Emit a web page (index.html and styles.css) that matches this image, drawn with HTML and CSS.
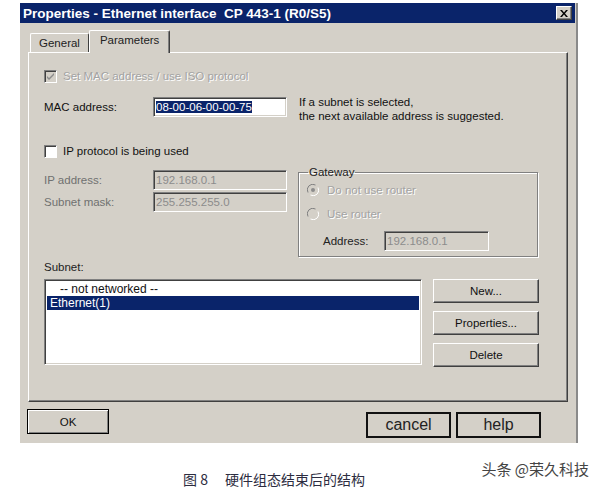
FILE: index.html
```html
<!DOCTYPE html>
<html lang="en">

<head>
    <meta charset="UTF-8">
    <title>Properties - Ethernet interface</title>
    <link rel="stylesheet" href="styles.css">
</head>

<body>
    <div class="dialog">
        <div class="titlebar">
            <span class="title">Properties - Ethernet interface&nbsp; CP 443-1 (R0/S5)</span>
            <span class="close">
                <svg width="8" height="7" viewBox="0 0 8 7"><path d="M0 0h2l2 2.5L6 0h2L5 3.5 8 7H6L4 4.5 2 7H0l3-3.5z" fill="#000"/></svg>
            </span>
        </div>

        <div class="tabs">
            <div class="tab">General</div>
            <div class="tab active">Parameters</div>
        </div>

        <div class="panel">
            <div class="check disabled">
                <span class="box box-disabled">
                    <svg width="9" height="9" viewBox="0 0 9 9"><path d="M1 4l2 2 5-5v2L3 8 1 6z" fill="#8c8c8c"/></svg>
                </span>
                <span class="dim">Set MAC address / use ISO protocol</span>
            </div>

            <div class="mac-row">
                <span class="field-label">MAC address:</span>
                <div class="input"><span class="sel">08-00-06-00-00-75</span></div>
                <div class="hint">If a subnet is selected,<br>the next available address is suggested.</div>
            </div>

            <div class="check ip-check">
                <span class="box"></span>
                <span>IP protocol is being used</span>
            </div>

            <div class="ip-row">
                <div class="ip-fields">
                    <div class="field-row">
                        <span class="field-label grey">IP address:</span>
                        <div class="input input-off">192.168.0.1</div>
                    </div>
                    <div class="field-row">
                        <span class="field-label grey">Subnet mask:</span>
                        <div class="input input-off">255.255.255.0</div>
                    </div>
                </div>

                <fieldset class="gateway">
                    <legend>Gateway</legend>
                    <div class="radio-row">
                        <svg class="radio" width="12" height="12" viewBox="0 0 12 12">
                            <circle cx="6" cy="6" r="5.5" fill="#d4d0c8"/>
                            <path d="M1 8.5A5.5 5.5 0 0 1 8.5 1" stroke="#808080" fill="none"/>
                            <path d="M11 3.5A5.5 5.5 0 0 1 3.5 11" stroke="#fff" fill="none"/>
                            <circle cx="6" cy="6" r="2" fill="#8c8c8c"/>
                        </svg>
                        <span class="dim">Do not use router</span>
                    </div>
                    <div class="radio-row second">
                        <svg class="radio" width="12" height="12" viewBox="0 0 12 12">
                            <circle cx="6" cy="6" r="5.5" fill="#d4d0c8"/>
                            <path d="M1 8.5A5.5 5.5 0 0 1 8.5 1" stroke="#808080" fill="none"/>
                            <path d="M11 3.5A5.5 5.5 0 0 1 3.5 11" stroke="#fff" fill="none"/>
                        </svg>
                        <span class="dim">Use router</span>
                    </div>
                    <div class="address-row">
                        <span class="address-label">Address:</span>
                        <div class="input input-off address-input">192.168.0.1</div>
                    </div>
                </fieldset>
            </div>

            <div class="subnet-label">Subnet:</div>
            <div class="subnet-row">
                <div class="listbox">
                    <div class="item not-net">-- not networked --</div>
                    <div class="item selected">Ethernet(1)</div>
                </div>
                <div class="side-buttons">
                    <div class="btn">New...</div>
                    <div class="btn">Properties...</div>
                    <div class="btn">Delete</div>
                </div>
            </div>
        </div>

        <div class="footer">
            <div class="btn ok-btn">OK</div>
            <div class="big-btn cancel-btn">cancel</div>
            <div class="big-btn">help</div>
        </div>
    </div>

    <div class="bottom">
        <div class="caption"><span class="fig">图 8</span>硬件组态结束后的结构</div>
        <div class="mark">头条 @荣久科技</div>
    </div>
</body>

</html>
```

FILE: styles.css
```css
body {
    margin: 0;
    background-color: #fff;
    font-family: "Liberation Sans", Arial, sans-serif;
    font-size: 11.5px;
    color: #111;
}

.dialog {
    margin: 3px 0 0 20px;
    width: 558px;
    height: 440px;
    box-sizing: border-box;
    background-color: #d4d0c8;
    border-right: 2px solid #8a8a8a;
}

.titlebar {
    height: 20px;
    margin-right: 1px;
    background-color: #0a246a;
    display: flex;
    align-items: center;
    justify-content: space-between;
    padding: 0 3px 0 3px;
}

.title {
    color: #fff;
    font-weight: bold;
    font-size: 13.5px;
}

.close {
    width: 16px;
    height: 14px;
    box-sizing: border-box;
    background-color: #d4d0c8;
    border: 1px solid;
    border-color: #fff #404040 #404040 #fff;
    box-shadow: inset -1px -1px #808080;
    display: flex;
    align-items: center;
    justify-content: center;
}

.tabs {
    display: flex;
    align-items: flex-end;
    margin: 8px 0 0 10px;
    height: 21px;
    position: relative;
    z-index: 1;
}

.tab {
    height: 19px;
    box-sizing: border-box;
    padding: 0 8px;
    line-height: 18px;
    border: 1px solid;
    border-color: #fff #404040 transparent #fff;
    border-bottom: none;
    border-radius: 2px 2px 0 0;
    color: #222;
}

.tab.active {
    height: 23px;
    margin-bottom: -1px;
    padding: 0 10px;
    line-height: 19px;
    background-color: #d4d0c8;
    box-shadow: inset -1px 0 #808080;
}

.panel {
    margin-left: 8px;
    width: 540px;
    height: 350px;
    box-sizing: border-box;
    border: 1px solid;
    border-color: #fff #404040 #404040 #fff;
    box-shadow: inset -1px -1px #808080;
    padding: 16px 0 0 15px;
}

.check {
    display: flex;
    align-items: center;
    height: 14px;
}

.box {
    width: 13px;
    height: 13px;
    box-sizing: border-box;
    background-color: #fff;
    border: 1px solid;
    border-color: #808080 #fff #fff #808080;
    box-shadow: inset 1px 1px #404040;
    margin-right: 6px;
    display: flex;
    align-items: center;
    justify-content: center;
}

.box-disabled {
    background-color: #d4d0c8;
}

.dim {
    color: #a3a3a3;
    text-shadow: 1px 1px 0 #fff;
}

.grey {
    color: #707070;
}

.mac-row {
    display: flex;
    align-items: flex-start;
    margin-top: 14px;
}

.field-label {
    width: 109px;
    line-height: 20px;
    flex-shrink: 0;
}

.input {
    width: 134px;
    height: 20px;
    box-sizing: border-box;
    background-color: #fff;
    border: 1px solid;
    border-color: #808080 #fff #fff #808080;
    box-shadow: inset 1px 1px #404040, inset -1px -1px #d4d0c8;
    padding: 0 2px;
    line-height: 18px;
    flex-shrink: 0;
}

.sel {
    background-color: #0a246a;
    color: #fff;
}

.input-off {
    background-color: #d4d0c8;
    color: #8c8c8c;
}

.hint {
    margin: -2px 0 0 12px;
    line-height: 14px;
}

.ip-check {
    margin-top: 21px;
}

.ip-row {
    display: flex;
    align-items: flex-start;
    margin-top: 7px;
}

.ip-fields {
    width: 243px;
    margin-top: 5px;
    display: flex;
    flex-direction: column;
    gap: 2px;
}

.field-row {
    display: flex;
}

.gateway {
    margin: 0 0 0 11px;
    padding: 0 0 5px 0;
    width: 240px;
    box-sizing: border-box;
    border: 1px solid #808080;
    box-shadow: inset 1px 1px #fff, 1px 1px #fff;
}

.gateway legend {
    margin-left: 9px;
    padding: 0 1px;
    line-height: 14px;
    color: #222;
}

.radio-row {
    display: flex;
    align-items: center;
    height: 14px;
    margin: 4px 0 0 8px;
}

.radio-row.second {
    margin-top: 10px;
}

.radio {
    margin-right: 8px;
}

.address-row {
    display: flex;
    align-items: center;
    margin: 10px 0 0 24px;
}

.address-label {
    width: 61px;
    color: #222;
}

.address-input {
    width: 105px;
}

.subnet-label {
    margin-top: 3px;
    line-height: 14px;
    color: #222;
}

.subnet-row {
    display: flex;
    align-items: flex-start;
    margin-top: 5px;
}

.listbox {
    width: 378px;
    height: 86px;
    box-sizing: border-box;
    background-color: #fff;
    border: 1px solid;
    border-color: #808080 #fff #fff #808080;
    box-shadow: inset 1px 1px #404040, inset -1px -1px #d4d0c8;
    padding: 2px 2px 0 2px;
    font-size: 12px;
}

.item {
    height: 14px;
    line-height: 14px;
    padding-left: 3px;
}

.item.not-net {
    padding-left: 13px;
}

.item.selected {
    background-color: #0a246a;
    color: #fff;
}

.side-buttons {
    margin-left: 11px;
    display: flex;
    flex-direction: column;
    gap: 8px;
}

.btn {
    width: 106px;
    height: 24px;
    box-sizing: border-box;
    background-color: #d4d0c8;
    border: 1px solid;
    border-color: #fff #404040 #404040 #fff;
    box-shadow: inset -1px -1px #808080;
    display: flex;
    align-items: center;
    justify-content: center;
    color: #111;
}

.footer {
    display: flex;
    align-items: flex-start;
    margin-top: 7px;
    padding: 0 35px 0 7px;
}

.ok-btn {
    width: 82px;
    height: 25px;
    border: 1px solid #000;
    box-shadow: inset 1px 1px #fff, inset -1px -1px #808080;
}

.big-btn {
    width: 85px;
    height: 26px;
    box-sizing: border-box;
    border: 2px solid #111;
    margin-top: 3px;
    display: flex;
    align-items: center;
    justify-content: center;
    font-size: 16px;
    color: #222;
}

.cancel-btn {
    margin-left: auto;
    margin-right: 5px;
}

.bottom {
    display: flex;
    align-items: flex-start;
    padding-right: 13px;
    font-family: "Noto Sans CJK SC", sans-serif;
}

.caption {
    margin: 28px 0 0 183px;
    font-size: 14px;
    line-height: 16px;
    color: #2c2c40;
}

.fig {
    margin-right: 17px;
}

.mark {
    margin: 17px 0 0 auto;
    font-size: 15px;
    line-height: 18px;
    color: #444;
}
```
